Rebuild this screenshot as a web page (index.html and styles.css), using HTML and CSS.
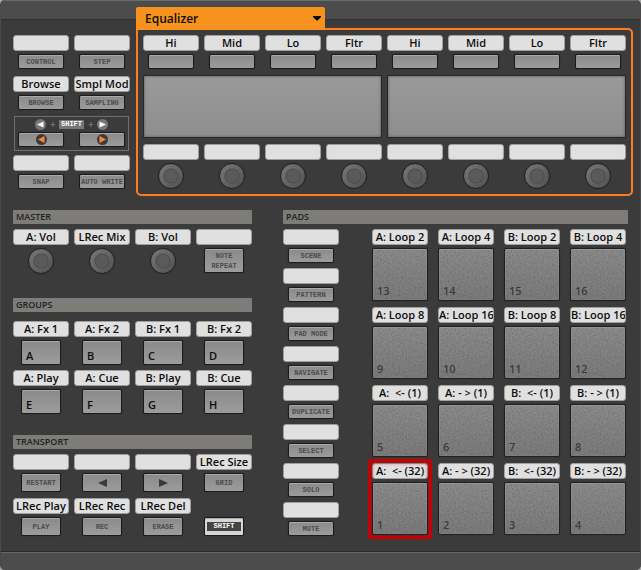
FILE: index.html
```html
<!DOCTYPE html>
<html lang="en">
<head>
<meta charset="utf-8">
<title>Controller Editor</title>
<link rel="stylesheet" href="styles.css">
</head>
<body>
<svg class="defs" aria-hidden="true">
  <filter id="grain" x="0" y="0" width="100%" height="100%">
    <feTurbulence type="fractalNoise" baseFrequency="0.6" numOctaves="2" seed="4"/>
    <feColorMatrix type="matrix" values="0 0 0 0 0  0 0 0 0 0  0 0 0 0 0  1.6 0 0 0 -0.6"/>
  </filter>
</svg>
<main class="device">
  <div class="upper">
    <section class="controls" aria-label="Controls">
      <div class="cell"><label class="tag" for="control"></label><button class="key" id="control">CONTROL</button></div>
      <div class="cell"><label class="tag" for="step"></label><button class="key" id="step">STEP</button></div>
      <div class="cell"><label class="tag" for="browse"><span>Browse</span></label><button class="key" id="browse">BROWSE</button></div>
      <div class="cell"><label class="tag" for="sampling"><span>Smpl Mod</span></label><button class="key" id="sampling">SAMPLING</button></div>
      <div class="pager">
        <div class="pager-legend">
          <svg class="dot" viewBox="0 0 22 22"><circle cx="11" cy="11" r="11" fill="#777"/><path d="M4 11 17 5V17Z" fill="#fff"/></svg>
          <span class="plus">+</span><span class="chip">SHIFT</span><span class="plus">+</span>
          <svg class="dot" viewBox="0 0 22 22"><circle cx="11" cy="11" r="11" fill="#777"/><path d="M18 11 5 5V17Z" fill="#fff"/></svg>
        </div>
        <button class="key" aria-label="Previous page"><svg class="dot" viewBox="0 0 22 22"><circle cx="11" cy="11" r="11" fill="#3b3b3b"/><path d="M4 11 17 4V18Z" fill="#ff8534"/></svg></button>
        <button class="key" aria-label="Next page"><svg class="dot" viewBox="0 0 22 22"><circle cx="11" cy="11" r="11" fill="#3b3b3b"/><path d="M18 11 5 4V18Z" fill="#ff8534"/></svg></button>
      </div>
      <div class="cell"><label class="tag" for="snap"></label><button class="key" id="snap">SNAP</button></div>
      <div class="cell"><label class="tag" for="auto"></label><button class="key" id="auto">AUTO WRITE</button></div>
    </section>

    <section class="page" aria-label="Knob page">
      <div class="picker">
        <select aria-label="Page"><option>Equalizer</option></select>
        <svg viewBox="0 0 8 5"><path d="M0 0H8V1L4.500 4.500H3.500L0 1Z"/></svg>
      </div>
      <div class="strip">
        <div class="cell"><label class="tag" for="b1"><span>Hi</span></label><button class="key" id="b1"></button></div>
        <div class="cell"><label class="tag" for="b2"><span>Mid</span></label><button class="key" id="b2"></button></div>
        <div class="cell"><label class="tag" for="b3"><span>Lo</span></label><button class="key" id="b3"></button></div>
        <div class="cell"><label class="tag" for="b4"><span>Fltr</span></label><button class="key" id="b4"></button></div>
        <div class="cell"><label class="tag" for="b5"><span>Hi</span></label><button class="key" id="b5"></button></div>
        <div class="cell"><label class="tag" for="b6"><span>Mid</span></label><button class="key" id="b6"></button></div>
        <div class="cell"><label class="tag" for="b7"><span>Lo</span></label><button class="key" id="b7"></button></div>
        <div class="cell"><label class="tag" for="b8"><span>Fltr</span></label><button class="key" id="b8"></button></div>
        <div class="screen"></div>
        <div class="screen"></div>
        <div class="cell"><label class="tag" for="k1"></label><input class="knob" type="range" id="k1" aria-label="Knob 1"></div>
        <div class="cell"><label class="tag" for="k2"></label><input class="knob" type="range" id="k2" aria-label="Knob 2"></div>
        <div class="cell"><label class="tag" for="k3"></label><input class="knob" type="range" id="k3" aria-label="Knob 3"></div>
        <div class="cell"><label class="tag" for="k4"></label><input class="knob" type="range" id="k4" aria-label="Knob 4"></div>
        <div class="cell"><label class="tag" for="k5"></label><input class="knob" type="range" id="k5" aria-label="Knob 5"></div>
        <div class="cell"><label class="tag" for="k6"></label><input class="knob" type="range" id="k6" aria-label="Knob 6"></div>
        <div class="cell"><label class="tag" for="k7"></label><input class="knob" type="range" id="k7" aria-label="Knob 7"></div>
        <div class="cell"><label class="tag" for="k8"></label><input class="knob" type="range" id="k8" aria-label="Knob 8"></div>
      </div>
    </section>
  </div>

  <div class="lower">
    <div class="side">
      <section>
        <h2>MASTER</h2>
        <div class="quad">
          <div class="cell"><label class="tag" for="volA"><span>A: Vol</span></label><input class="knob" type="range" id="volA"></div>
          <div class="cell"><label class="tag" for="mix"><span>LRec Mix</span></label><input class="knob" type="range" id="mix"></div>
          <div class="cell"><label class="tag" for="volB"><span>B: Vol</span></label><input class="knob" type="range" id="volB"></div>
          <div class="cell"><label class="tag" for="repeat"></label><button class="key tall repeat" id="repeat">NOTE<br>REPEAT</button></div>
        </div>
      </section>
      <section>
        <h2>GROUPS</h2>
        <div class="quad groups">
          <div class="cell"><label class="tag" for="gA"><span>A: Fx 1</span></label><button class="key tall group" id="gA">A</button></div>
          <div class="cell"><label class="tag" for="gB"><span>A: Fx 2</span></label><button class="key tall group" id="gB">B</button></div>
          <div class="cell"><label class="tag" for="gC"><span>B: Fx 1</span></label><button class="key tall group" id="gC">C</button></div>
          <div class="cell"><label class="tag" for="gD"><span>B: Fx 2</span></label><button class="key tall group" id="gD">D</button></div>
          <div class="cell"><label class="tag" for="gE"><span>A: Play</span></label><button class="key tall group" id="gE">E</button></div>
          <div class="cell"><label class="tag" for="gF"><span>A: Cue</span></label><button class="key tall group" id="gF">F</button></div>
          <div class="cell"><label class="tag" for="gG"><span>B: Play</span></label><button class="key tall group" id="gG">G</button></div>
          <div class="cell"><label class="tag" for="gH"><span>B: Cue</span></label><button class="key tall group" id="gH">H</button></div>
        </div>
      </section>
      <section>
        <h2>TRANSPORT</h2>
        <div class="quad transport">
          <div class="cell"><label class="tag" for="restart"></label><button class="key mid" id="restart">RESTART</button></div>
          <div class="cell"><label class="tag" for="back"></label><button class="key mid" id="back" aria-label="Back"><svg class="arrow" viewBox="0 0 9 8"><path d="M0 4 9 0V8Z"/></svg></button></div>
          <div class="cell"><label class="tag" for="forward"></label><button class="key mid" id="forward" aria-label="Forward"><svg class="arrow" viewBox="0 0 9 8"><path d="M9 4 0 0V8Z"/></svg></button></div>
          <div class="cell"><label class="tag" for="grid"><span>LRec Size</span></label><button class="key mid" id="grid">GRID</button></div>
          <div class="cell"><label class="tag" for="play"><span>LRec Play</span></label><button class="key mid" id="play">PLAY</button></div>
          <div class="cell"><label class="tag" for="rec"><span>LRec Rec</span></label><button class="key mid" id="rec">REC</button></div>
          <div class="cell"><label class="tag" for="erase"><span>LRec Del</span></label><button class="key mid" id="erase">ERASE</button></div>
          <div class="cell untagged"><button class="key mid lit"><span class="lit-text">SHIFT</span></button></div>
        </div>
      </section>
    </div>

    <section class="pads">
      <h2>PADS</h2>
      <div class="pads-body">
        <div class="modes">
          <div class="cell"><label class="tag" for="scene"></label><button class="key" id="scene">SCENE</button></div>
          <div class="cell"><label class="tag" for="pattern"></label><button class="key" id="pattern">PATTERN</button></div>
          <div class="cell"><label class="tag" for="padmode"></label><button class="key" id="padmode">PAD MODE</button></div>
          <div class="cell"><label class="tag" for="navigate"></label><button class="key" id="navigate">NAVIGATE</button></div>
          <div class="cell"><label class="tag" for="duplicate"></label><button class="key" id="duplicate">DUPLICATE</button></div>
          <div class="cell"><label class="tag" for="select"></label><button class="key" id="select">SELECT</button></div>
          <div class="cell"><label class="tag" for="solo"></label><button class="key" id="solo">SOLO</button></div>
          <div class="cell"><label class="tag" for="mute"></label><button class="key" id="mute">MUTE</button></div>
        </div>
        <div class="pad-grid">
          <div class="cell"><label class="tag" for="p13"><span>A: Loop 2</span></label><button class="pad" id="p13">13</button></div>
          <div class="cell"><label class="tag" for="p14"><span>A: Loop 4</span></label><button class="pad" id="p14">14</button></div>
          <div class="cell"><label class="tag" for="p15"><span>B: Loop 2</span></label><button class="pad" id="p15">15</button></div>
          <div class="cell"><label class="tag" for="p16"><span>B: Loop 4</span></label><button class="pad" id="p16">16</button></div>
          <div class="cell"><label class="tag" for="p9"><span>A: Loop 8</span></label><button class="pad" id="p9">9</button></div>
          <div class="cell"><label class="tag" for="p10"><span>A: Loop 16</span></label><button class="pad" id="p10">10</button></div>
          <div class="cell"><label class="tag" for="p11"><span>B: Loop 8</span></label><button class="pad" id="p11">11</button></div>
          <div class="cell"><label class="tag" for="p12"><span>B: Loop 16</span></label><button class="pad" id="p12">12</button></div>
          <div class="cell"><label class="tag" for="p5"><span>A:  &lt;- (1)</span></label><button class="pad" id="p5">5</button></div>
          <div class="cell"><label class="tag" for="p6"><span>A: - &gt; (1)</span></label><button class="pad" id="p6">6</button></div>
          <div class="cell"><label class="tag" for="p7"><span>B:  &lt;- (1)</span></label><button class="pad" id="p7">7</button></div>
          <div class="cell"><label class="tag" for="p8"><span>B: - &gt; (1)</span></label><button class="pad" id="p8">8</button></div>
          <div class="cell selected"><label class="tag" for="p1"><span>A:  &lt;- (32)</span></label><button class="pad" id="p1">1</button></div>
          <div class="cell"><label class="tag" for="p2"><span>A: - &gt; (32)</span></label><button class="pad" id="p2">2</button></div>
          <div class="cell"><label class="tag" for="p3"><span>B:  &lt;- (32)</span></label><button class="pad" id="p3">3</button></div>
          <div class="cell"><label class="tag" for="p4"><span>B: - &gt; (32)</span></label><button class="pad" id="p4">4</button></div>
        </div>
      </div>
    </section>
  </div>
</main>
</body>
</html>
```
FILE: styles.css
```css
* { box-sizing: border-box; }

body {
  margin: 0;
  background: #a8a8a8;
  font-family: "Open Sans", "Noto Sans", sans-serif;
  font-size: 11px;
  font-weight: 600;
  color: #0c0c0c;
}

button, select, input { font: inherit; color: inherit; margin: 0; }

.defs { position: absolute; width: 0; height: 0; }

.device {
  min-height: 100vh;
  padding: 7px 7px 34px 12px;
  border: solid #4a4a4a;
  border-width: 0 1px;
  border-radius: 5px;
  background:
    linear-gradient(#6c6c6c 0 1px, #4c4c4c 1px 19px, #303030 19px 20px) top / 100% 20px no-repeat,
    linear-gradient(#2b2b2b 0 1px, #666 1px 2px, #4c4c4c 2px) bottom / 100% 19px no-repeat,
    #3b3b3b;
}

.upper { display: flex; gap: 6px; }

.cell { display: flex; flex-direction: column; align-items: center; gap: 3px; min-width: 0; }

.tag {
  display: flex;
  align-items: center;
  width: 100%;
  height: 16px;
  border: 1px solid #a0a0a0;
  border-radius: 3px;
  background: #e0e0e0;
  line-height: 14px;
  white-space: pre;
  overflow: hidden;
}
.tag span { margin: 0 auto; }

.key {
  display: flex;
  align-items: center;
  justify-content: center;
  width: 46px;
  height: 15px;
  padding: 0;
  border: 1px solid #1c1c1c;
  border-radius: 2px;
  background: linear-gradient(#8a8a8a, #9c9c9c);
  box-shadow: inset 0 1px #aaa, 0 0 1px #1c1c1c;
  font-family: "Liberation Mono", monospace;
  font-size: 7px;
  font-weight: 700;
  line-height: 10px;
  color: #4c4c4c;
}

.controls {
  display: grid;
  grid-template-columns: repeat(2, 56px);
  gap: 7px 5px;
  align-content: start;
  width: 117px;
  padding-top: 28px;
}
.controls .cell:nth-child(n+6) { margin-top: -3px; }

.pager {
  grid-column: 1 / -1;
  display: grid;
  grid-template-columns: repeat(2, 46px);
  justify-content: center;
  justify-items: center;
  align-content: start;
  gap: 2px 15px;
  height: 35px;
  margin: -1px 1px 0;
  padding: 2px 0 0;
  border: 1px solid #707070;
}
.pager-legend {
  grid-column: 1 / -1;
  display: flex;
  align-items: center;
  gap: 4px;
  height: 11px;
}
.dot { width: 11px; height: 11px; flex: none; }
.arrow { width: 9px; height: 8px; fill: #3a3a3a; }
.plus { width: 5px; color: #8c8c8c; font-size: 10px; font-weight: 400; line-height: 11px; text-align: center; }
.chip {
  width: 25px;
  background: #777;
  color: #fff;
  font-family: "Liberation Mono", monospace;
  font-size: 7px;
  font-weight: 700;
  line-height: 9px;
  text-align: center;
}

.page { flex: 1; min-width: 0; }
.picker { display: grid; width: 189px; height: 23px; align-items: center; }
.picker select {
  grid-area: 1 / 1;
  width: 100%;
  height: 23px;
  padding: 0 9px;
  border: 0;
  border-radius: 2px 2px 0 0;
  appearance: none;
  background: #f7921e;
  font-size: 12px;
}
.picker svg { grid-area: 1 / 1; justify-self: end; width: 8px; height: 5px; margin-right: 4px; pointer-events: none; }

.strip {
  display: grid;
  grid-template-columns: repeat(8, 1fr);
  gap: 6px 5px;
  margin-top: -2px;
  padding: 5px;
  border: 2px solid #ff7b1e;
  border-radius: 0 5px 5px 5px;
}
.screen {
  grid-column: span 4;
  height: 63px;
  border: 1px solid #262626;
  border-radius: 1px;
  background: linear-gradient(#999, #8e8e8e);
  box-shadow: inset 0 0 3px #555;
}

.knob {
  width: 26px;
  height: 26px;
  border: 1px solid #202020;
  border-radius: 50%;
  appearance: none;
  background:
    radial-gradient(circle, #5a5a5a 0 6px, #4c4c4c 7px, transparent 8px),
    linear-gradient(135deg, #787878, #505050);
  box-shadow: 0 0 1px #303030;
}
.knob::-webkit-slider-thumb { appearance: none; width: 0; height: 0; }

.lower { display: flex; gap: 31px; margin-top: 14px; }
.side { width: 239px; }

h2 {
  margin: 0 0 5px;
  padding-left: 3px;
  border-radius: 1px;
  background: #7d7c79;
  font-size: 9px;
  font-weight: 600;
  line-height: 14px;
  color: #222;
}

.quad { display: grid; grid-template-columns: repeat(4, 1fr); gap: 5px; }
.side section + section { margin-top: 24px; }
.side section:last-child { margin-top: 21px; }
.side .key { width: 40px; }
.side .tall { height: 25px; }
.side .mid { height: 19px; }
.groups { padding-top: 4px; }
.transport { row-gap: 6px; }
.untagged { justify-content: flex-end; }

.group {
  justify-content: flex-start;
  align-items: flex-end;
  padding: 0 4px 1px;
  font-family: "Open Sans", "Noto Sans", sans-serif;
  font-size: 11px;
  font-weight: 600;
  line-height: 14px;
  color: #0c0c0c;
}
.lit { background: #d6d6d6; }
.lit-text { width: 34px; background: #444; color: #fff; line-height: 9px; }

.pads { flex: 1; min-width: 0; margin-right: 5px; }
.pads-body { display: flex; gap: 33px; }
.modes { display: grid; gap: 5px; width: 56px; align-content: start; }
.pad-grid {
  flex: 1;
  display: grid;
  grid-template-columns: repeat(4, 1fr);
  gap: 6px 10px;
  margin-right: 2px;
  align-content: start;
}
.pad {
  position: relative;
  display: flex;
  align-items: flex-end;
  width: 100%;
  height: 53px;
  padding: 0 4px 2px;
  border: 1px solid #202020;
  border-radius: 2px;
  background: linear-gradient(#8c8c8c, #7c7c7c);
  box-shadow: inset 0 1px #959595, 0 0 1px #202020;
  line-height: 14px;
  color: #404040;
}
.pad::before {
  content: "";
  position: absolute;
  inset: 1px;
  filter: url(#grain);
  opacity: .2;
}
.selected { position: relative; }
.selected::before {
  content: "";
  position: absolute;
  inset: -4px;
  border: 3px solid #c80000;
  border-radius: 4px;
  box-shadow: inset 0 0 4px #c80000;
  pointer-events: none;
}
```
